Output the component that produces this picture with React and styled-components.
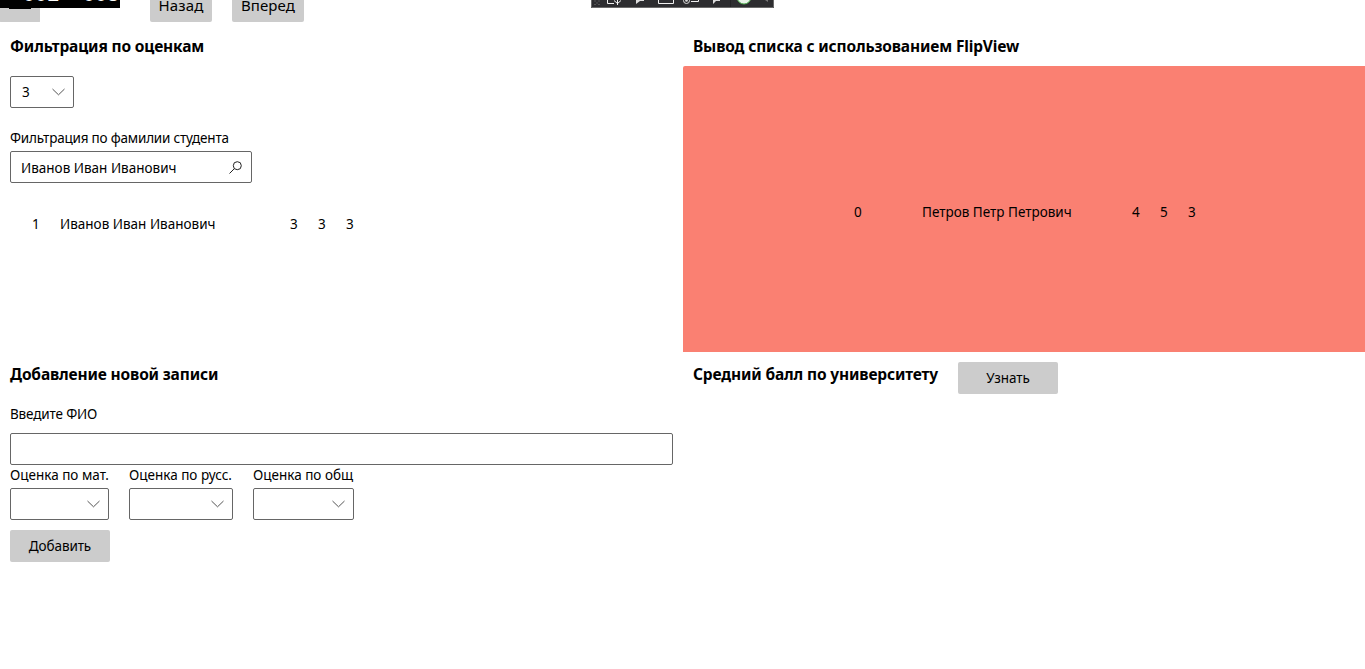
import React from "react";
import styled, { createGlobalStyle } from "styled-components";

const GlobalStyle = createGlobalStyle`
  * { box-sizing: border-box; }
  body {
    margin: 0;
    background: #fff;
    color: #000;
    font: 13.5px/20px "Noto Sans", "Open Sans", sans-serif;
    overflow: hidden;
  }
`;

const Page = styled.div`
  position: relative;
  height: 669px;
  display: flex;
  flex-direction: column;
  overflow: hidden;
`;

const NavBar = styled.nav`
  height: 22px;
  flex: none;
  display: flex;
  align-items: flex-end;
  overflow: hidden;
`;

const Button = styled.button`
  height: 32px;
  width: ${(p) => p.$width}px;
  flex: none;
  padding: 0;
  border: 0;
  border-radius: 2px;
  background: #ccc;
  color: #000;
  font: inherit;
  letter-spacing: -0.1px;
  white-space: nowrap;
`;

const NavButton = styled(Button)`
  font-size: 15px;
  letter-spacing: 0.1px;
  margin-right: 20px;
  padding-bottom: 2px;
`;

const BackButton = styled(Button)`
  margin-right: 110px;
  height: 33px;
  margin-bottom: -1px;
`;

const FrameCounter = styled.div`
  position: absolute;
  top: 0;
  left: 0;
  width: 120px;
  height: 8px;
  background: #000;
  overflow: hidden;
  color: #fff;
  font: bold 20px/20px "Liberation Mono", monospace;

  span {
    display: block;
    margin: -14px 0 0 23px;
    white-space: pre;
  }
`;

const CounterShadow = styled.div`
  position: absolute;
  top: 8px;
  left: 9px;
  width: 22px;
  height: 1px;
  background: #000;
`;

const DebugBar = styled.svg`
  position: absolute;
  top: 0;
  left: 591px;
`;

const Columns = styled.main`
  display: grid;
  grid-template-columns: 683px 1fr;
  grid-template-rows: 330px 1fr;
  flex: 1;
`;

const Panel = styled.section`
  display: flex;
  flex-direction: column;
  align-items: flex-start;
  padding: ${(p) => p.$top}px 10px 0;
`;

const FlipPanel = styled.section`
  display: flex;
  flex-direction: column;
  padding-top: 14px;
`;

const Heading = styled.h2`
  margin: 0;
  font-size: 15.5px;
  line-height: 20px;
  font-weight: 700;
  letter-spacing: -0.15px;
  white-space: nowrap;
`;

const FlipHeading = styled(Heading)`
  padding-left: 10px;
`;

const FlipView = styled.div`
  margin-top: 10px;
  height: 286px;
  border-radius: 2px 0 0 0;
  background: #fa8072;
  display: flex;
  align-items: center;
  padding: 6px 0 0 171px;
`;

const Label = styled.label`
  white-space: nowrap;
  letter-spacing: ${(p) => p.$spacing || 0}px;
  margin-top: ${(p) => p.$gap || 0}px;
`;

const Field = styled.div`
  display: flex;
  align-items: center;
  justify-content: space-between;
  width: ${(p) => p.$width}px;
  height: 32px;
  margin-top: ${(p) => p.$gap}px;
  padding: 0 9px 0 10px;
  border: 1px solid #666;
  border-radius: 2px;
  background: #fff;
  white-space: nowrap;
`;

const ComboBox = styled(Field)`
  padding: 0 8px 0 11px;
`;

const FieldText = styled.span`
  padding-top: ${(p) => p.$drop || 0}px;
`;

const Record = styled.div`
  display: flex;
  margin-top: ${(p) => p.$gap || 0}px;
  padding-left: ${(p) => p.$indent || 0}px;
  white-space: nowrap;
`;

const RecordCell = styled.span`
  width: ${(p) => p.$width}px;
`;

const Grade = styled.span`
  width: 28px;
`;

const GradeFields = styled.div`
  display: flex;
  gap: 20px;
`;

const GradeField = styled.div`
  display: flex;
  flex-direction: column;
`;

const AddButton = styled(Button)`
  margin-top: 10px;
`;

const AveragePanel = styled.section`
  display: flex;
  align-items: flex-start;
  padding: 10px 10px 0;
`;

const AverageHeading = styled(Heading)`
  width: 265px;
  padding-top: 2px;
`;

function Chevron() {
  return (
    <svg width="13" height="8" viewBox="0 0 13 8" fill="none" stroke="#555" strokeWidth="1">
      <path d="M0.500 1L6.500 6.800L12.500 1" />
    </svg>
  );
}

function SearchIcon() {
  return (
    <svg width="13" height="13" viewBox="0 0 13 13" fill="none" stroke="#222" strokeWidth="1">
      <circle cx="8.3" cy="4.7" r="4" />
      <path d="M5.4 7.6L0.5 12.5" />
    </svg>
  );
}

function DebugToolbar() {
  return (
    <DebugBar width="183" height="8" viewBox="0 0 183 8" fill="none">
      <rect width="183" height="8" fill="#2d2d30" />
      <path d="M0.5 0V7.5H182.5V0" stroke="#6a6a6a" />
      <path d="M3 1h2M7 1h2M5 3h2M3 4.5h2M7 4.5h2" stroke="#555" />
      <path d="M16.5 0V3.5H23M26.5 0V5M23 0.5L26.5 3.5L30 0.5" stroke="#f1f1f1" />
      <path d="M45 0h8v1h-4l-4 3z" fill="#ddd" />
      <path d="M67.5 0V3.500H82.500V0" stroke="#f1f1f1" />
      <circle cx="95.5" cy="0.5" r="3" stroke="#ddd" />
      <circle cx="95.5" cy="0.5" r="1.3" fill="#ddd" />
      <path d="M100 1.5H107.500V0" stroke="#f1f1f1" />
      <path d="M122 0h7v1h-4l-3 3z" fill="#ddd" />
      <path d="M139.500 0V7" stroke="#222224" />
      <circle cx="153" cy="-3" r="7" fill="#e8f3e8" stroke="#4fae4f" />
      <path d="M174 0h3v2z" fill="#777" />
    </DebugBar>
  );
}

function StudentRecord({ id, name, grades, idWidth, nameWidth, indent, gap }) {
  return (
    <Record $gap={gap} $indent={indent}>
      <RecordCell $width={idWidth}>{id}</RecordCell>
      <RecordCell $width={nameWidth}>{name}</RecordCell>
      {grades.map((grade, i) => (
        <Grade key={i}>{grade}</Grade>
      ))}
    </Record>
  );
}

const SUBJECTS = [
  { label: "Оценка по мат.", width: 99 },
  { label: "Оценка по русс.", width: 104 },
  { label: "Оценка по общ", width: 101 },
];

export default function App() {
  return (
    <Page>
      <GlobalStyle />
      <NavBar>
        <BackButton $width={40} />
        <NavButton $width={62}>Назад</NavButton>
        <NavButton $width={72}>Вперед</NavButton>
      </NavBar>

      <Columns>
        <Panel $top={14}>
          <Heading>Фильтрация по оценкам</Heading>
          <ComboBox $width={64} $gap={20}>
            <FieldText>3</FieldText>
            <Chevron />
          </ComboBox>
          <Label $gap={20} $spacing={-0.2}>Фильтрация по фамилии студента</Label>
          <Field $width={242} $gap={3}>
            <FieldText $drop={2}>Иванов Иван Иванович</FieldText>
            <SearchIcon />
          </Field>
          <StudentRecord id="1" name="Иванов Иван Иванович" grades={[3, 3, 3]} idWidth={28} nameWidth={230} indent={22} gap={31} />
        </Panel>

        <FlipPanel>
          <FlipHeading>Вывод списка с использованием FlipView</FlipHeading>
          <FlipView>
            <StudentRecord id="0" name="Петров Петр Петрович" grades={[4, 5, 3]} idWidth={68} nameWidth={210} />
          </FlipView>
        </FlipPanel>

        <Panel $top={12}>
          <Heading>Добавление новой записи</Heading>
          <Label $gap={20} $spacing={-0.15}>Введите ФИО</Label>
          <Field $width={663} $gap={9} />
          <GradeFields>
            {SUBJECTS.map(({ label, width }) => (
              <GradeField key={label}>
                <Label>{label}</Label>
                <ComboBox $width={width} $gap={3}>
                  <FieldText />
                  <Chevron />
                </ComboBox>
              </GradeField>
            ))}
          </GradeFields>
          <AddButton $width={100}>Добавить</AddButton>
        </Panel>

        <AveragePanel>
          <AverageHeading>Средний балл по университету</AverageHeading>
          <Button $width={100}>Узнать</Button>
        </AveragePanel>
      </Columns>

      <FrameCounter>
        <span>001  003</span>
      </FrameCounter>
      <CounterShadow />
      <DebugToolbar />
    </Page>
  );
}
